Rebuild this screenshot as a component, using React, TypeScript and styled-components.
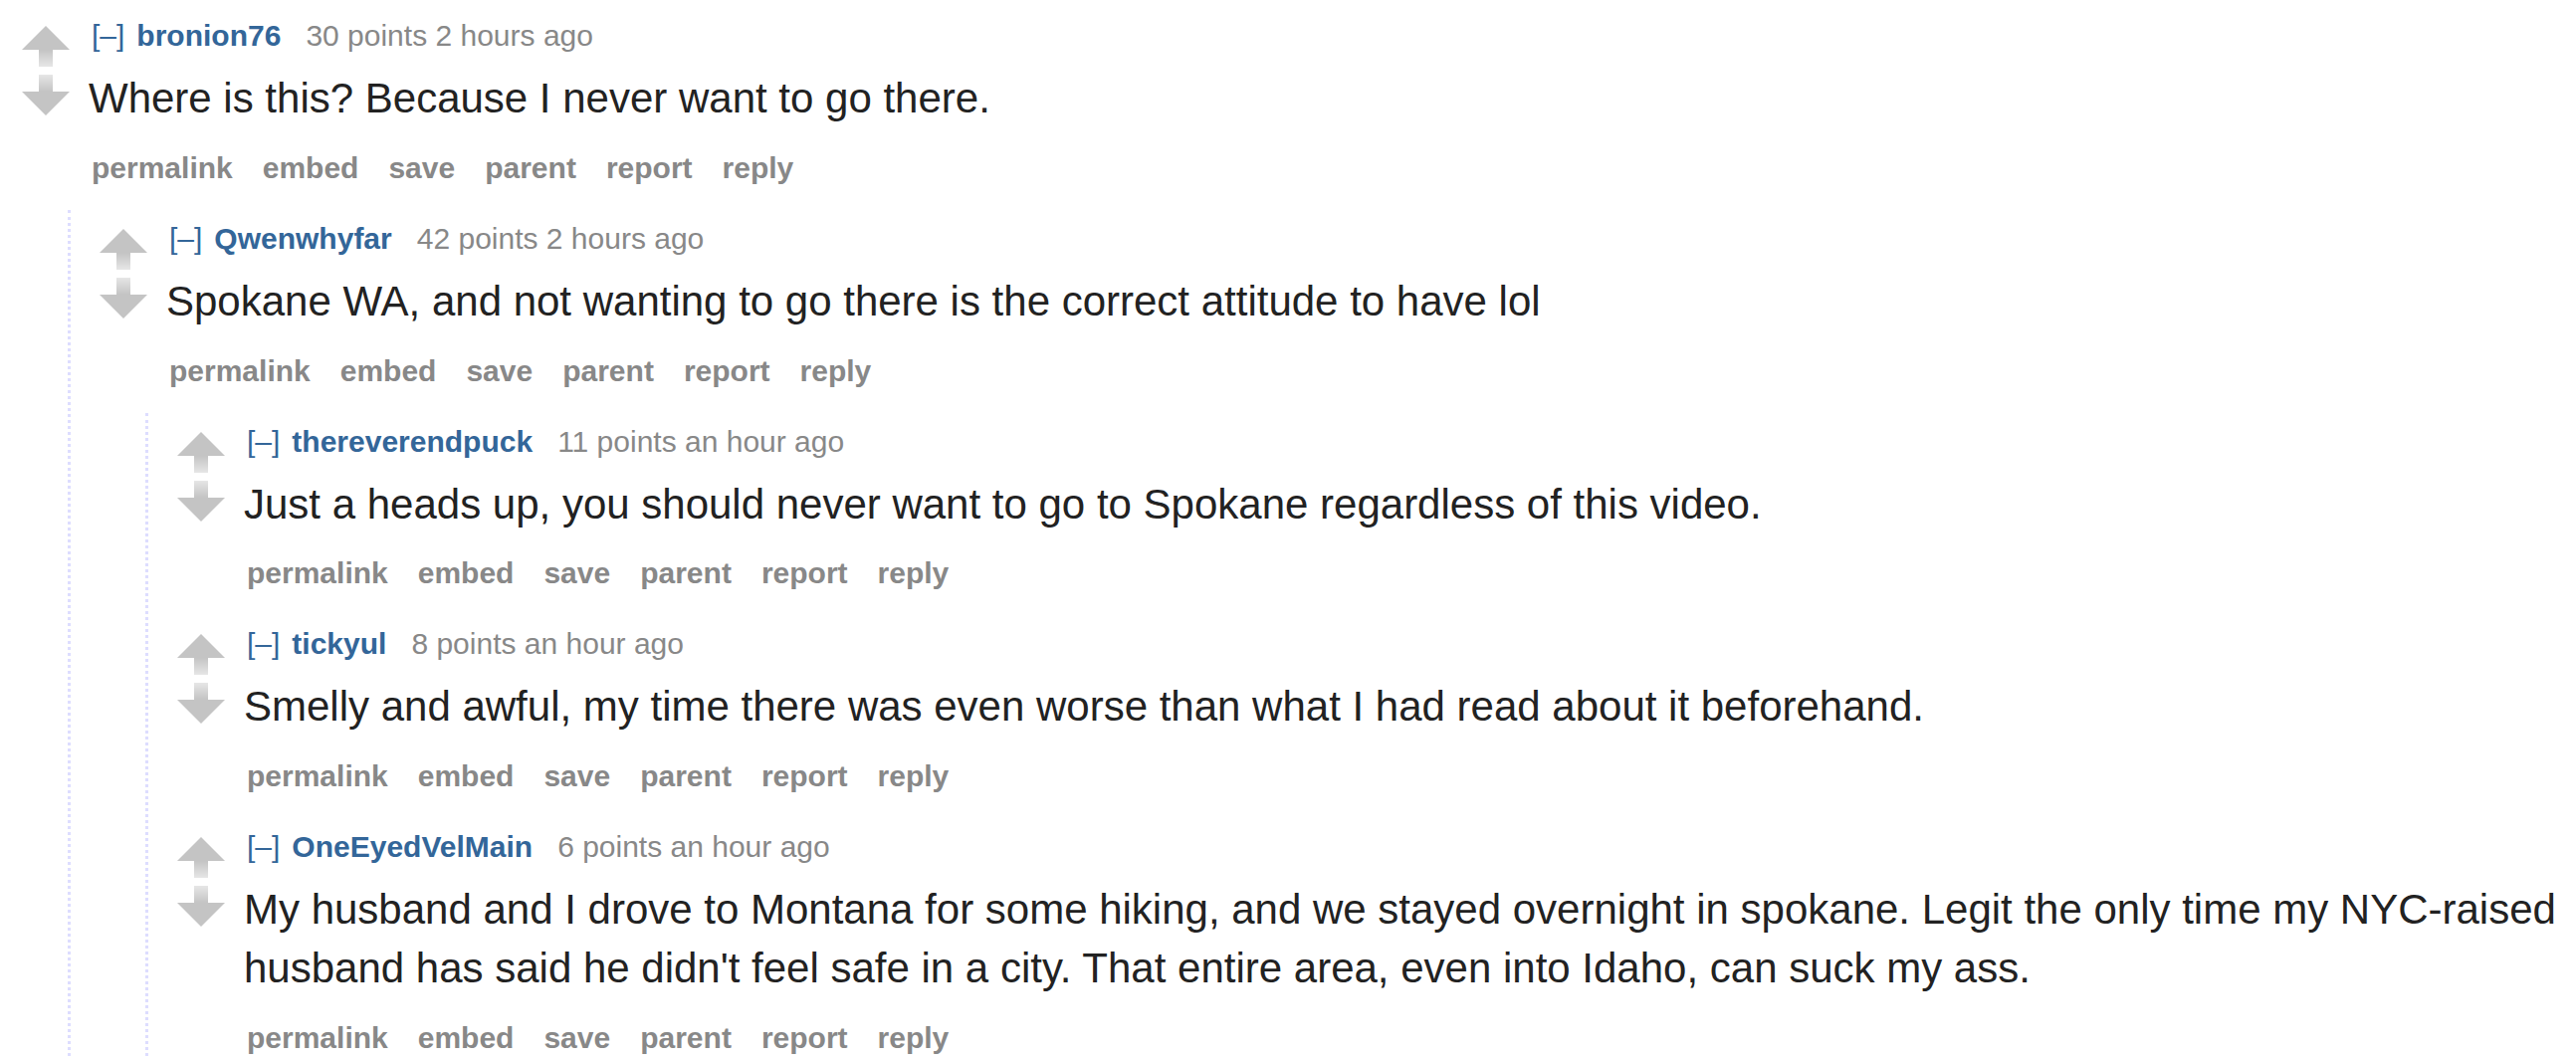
import React, { useId } from "react";
import styled, { createGlobalStyle } from "styled-components";

const GlobalStyle = createGlobalStyle`
  html, body {
    margin: 0;
    padding: 0;
    background: #ffffff;
  }
  body {
    font-family: "Liberation Sans", Arial, Helvetica, sans-serif;
  }
`;

const Page = styled.div`
  box-sizing: border-box;
  width: 2588px;
  padding: 7px 10px 0 22px;
`;

const CommentBox = styled.div<{ $root?: boolean }>`
  margin-top: ${(p) => (p.$root ? 0 : 24)}px;
  padding-top: 11px;
`;

const Row = styled.div`
  display: flex;
  align-items: flex-start;
`;

const Votes = styled.div`
  flex: none;
  width: 67px;
  margin-top: 8px;
  display: flex;
  flex-direction: column;
  gap: 8px;
`;

const ArrowSvg = styled.svg`
  display: block;
`;

const Entry = styled.div`
  flex: 1;
  min-width: 0;
`;

const Tagline = styled.div`
  padding-left: 3px;
  font-size: 30px;
  line-height: 36px;
  color: #888888;
  white-space: nowrap;
`;

const Expand = styled.span`
  color: #336699;
  margin-right: 12px;
`;

const Author = styled.span`
  color: #336699;
  font-weight: bold;
  margin-right: 25px;
`;

const Body = styled.p`
  margin: 16px 0 0;
  font-size: 42px;
  line-height: 58.8px;
  color: #222222;
`;

const Buttons = styled.ul`
  list-style: none;
  margin: 22px 0 0;
  padding: 0 0 0 3px;
  display: flex;
  gap: 30px;
  font-size: 30px;
  line-height: 36px;
  font-weight: bold;
  color: #888888;
`;

const Button = styled.li`
  white-space: nowrap;
`;

const Children = styled.div`
  margin-left: 46px;
  border-left: 3px dotted #ddddff;
  padding-left: 29px;
`;

const Arrow: React.FC<{ dir: "up" | "down" }> = ({ dir }) => {
  const id = useId().replace(/:/g, "");
  const dark = "#c4c4c4";
  const light = "#e6e6e6";
  return (
    <ArrowSvg width="48" height="41" viewBox="0 0 48 41">
      <defs>
        <linearGradient id={id} x1="0" y1="0" x2="0" y2="1">
          <stop offset="0" stopColor={dir === "up" ? dark : light} />
          <stop offset="1" stopColor={dir === "up" ? light : dark} />
        </linearGradient>
      </defs>
      {dir === "up" ? (
        <>
          <polygon points="24,0 48,24 0,24" fill={dark} />
          <rect x="17" y="24" width="14" height="17" fill={`url(#${id})`} />
        </>
      ) : (
        <>
          <rect x="17" y="0" width="14" height="17" fill={`url(#${id})`} />
          <polygon points="0,17 48,17 24,41" fill={dark} />
        </>
      )}
    </ArrowSvg>
  );
};

type CommentData = {
  author: string;
  points: number;
  time: string;
  body: string;
  children?: CommentData[];
};

const thread: CommentData = {
  author: "bronion76",
  points: 30,
  time: "2 hours ago",
  body: "Where is this? Because I never want to go there.",
  children: [
    {
      author: "Qwenwhyfar",
      points: 42,
      time: "2 hours ago",
      body: "Spokane WA, and not wanting to go there is the correct attitude to have lol",
      children: [
        {
          author: "thereverendpuck",
          points: 11,
          time: "an hour ago",
          body: "Just a heads up, you should never want to go to Spokane regardless of this video.",
        },
        {
          author: "tickyul",
          points: 8,
          time: "an hour ago",
          body: "Smelly and awful, my time there was even worse than what I had read about it beforehand.",
        },
        {
          author: "OneEyedVelMain",
          points: 6,
          time: "an hour ago",
          body: "My husband and I drove to Montana for some hiking, and we stayed overnight in spokane. Legit the only time my NYC-raised husband has said he didn't feel safe in a city. That entire area, even into Idaho, can suck my ass.",
        },
      ],
    },
  ],
};

const buttons = ["permalink", "embed", "save", "parent", "report", "reply"];

const Comment: React.FC<{ data: CommentData; root?: boolean }> = ({ data, root }) => (
  <CommentBox $root={root}>
    <Row>
      <Votes>
        <Arrow dir="up" />
        <Arrow dir="down" />
      </Votes>
      <Entry>
        <Tagline>
          <Expand>[–]</Expand>
          <Author>{data.author}</Author>
          {data.points} points {data.time}
        </Tagline>
        <Body>{data.body}</Body>
        <Buttons>
          {buttons.map((b) => (
            <Button key={b}>{b}</Button>
          ))}
        </Buttons>
      </Entry>
    </Row>
    {data.children && data.children.length > 0 && (
      <Children>
        {data.children.map((c) => (
          <Comment key={c.author} data={c} />
        ))}
      </Children>
    )}
  </CommentBox>
);

export default function App() {
  return (
    <>
      <GlobalStyle />
      <Page>
        <Comment data={thread} root />
      </Page>
    </>
  );
}
